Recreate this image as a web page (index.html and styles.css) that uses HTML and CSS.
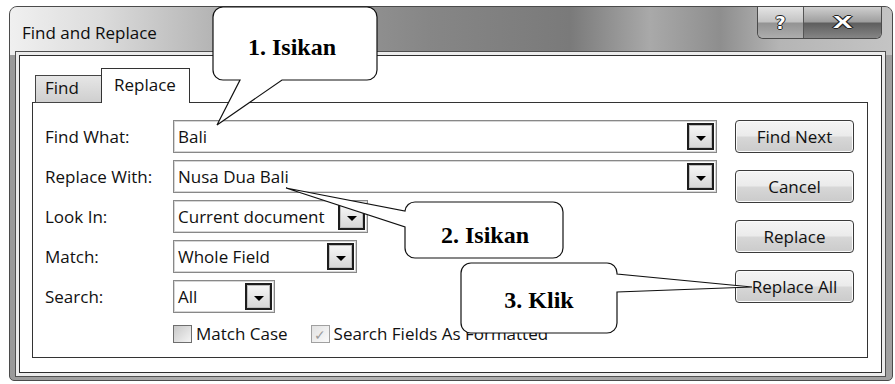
FILE: index.html
```html
<!DOCTYPE html>
<html lang="id">
<head>
  <meta charset="UTF-8" />
  <title>Find and Replace</title>
  <link rel="stylesheet" href="styles.css">
</head>
<body>

  <div class="window">
    <div class="titlebar">
      <span class="title">Find and Replace</span>
      <div class="caption">
        <span class="cap help">?</span>
        <span class="cap close"><b>X</b></span>
      </div>
    </div>

    <div class="client">
      <div class="tabs">
        <span class="tab">Find</span>
        <span class="tab active">Replace</span>
      </div>

      <div class="panel">
        <div class="form">
          <label>Find What:</label>
          <div class="combo w-full"><span>Bali</span><i class="drop"></i></div>

          <label>Replace With:</label>
          <div class="combo w-full"><span>Nusa Dua Bali</span><i class="drop"></i></div>

          <label>Look In:</label>
          <div class="combo w-look"><span>Current document</span><i class="drop"></i></div>

          <label>Match:</label>
          <div class="combo w-match"><span>Whole Field</span><i class="drop"></i></div>

          <label>Search:</label>
          <div class="combo w-search"><span>All</span><i class="drop"></i></div>

          <span></span>
          <div class="checks">
            <span class="check"></span><span class="check-label">Match Case</span>
            <span class="check checked">&#10003;</span><span class="check-label">Search Fields As Formatted</span>
          </div>
        </div>

        <div class="actions">
          <button class="btn">Find Next</button>
          <button class="btn">Cancel</button>
          <button class="btn">Replace</button>
          <button class="btn">Replace All</button>
        </div>
      </div>
    </div>
  </div>

  <!-- keterangan langkah -->
  <svg class="callouts" width="895" height="384" viewBox="0 0 895 384">
    <path d="M223 7 H367 A10 10 0 0 1 377 17 V70 A10 10 0 0 1 367 80 H282 L217 125 L240 80 H223 A10 10 0 0 1 213 70 V17 A10 10 0 0 1 223 7 Z" />
    <text x="292" y="55">1. Isikan</text>

    <path d="M415 202 H553 A10 10 0 0 1 563 212 V248 A10 10 0 0 1 553 258 H415 A10 10 0 0 1 405 248 V227 L286 188 L405 211 A10 10 0 0 1 415 202 Z" />
    <text x="485" y="243">2. Isikan</text>

    <path d="M471 263 H607 A10 10 0 0 1 617 273 V274 L752 287 L617 292 V323 A10 10 0 0 1 607 333 H471 A10 10 0 0 1 461 323 V273 A10 10 0 0 1 471 263 Z" />
    <text x="539" y="308">3. Klik</text>
  </svg>

</body>
</html>
```

FILE: styles.css
```css
* {
  box-sizing: border-box;
}

body {
  margin: 0;
  background: #fff;
  font-family: 'Open Sans', 'Noto Sans', sans-serif;
  font-size: 17px;
  color: #111;
  position: relative;
  width: 895px;
  height: 384px;
  overflow: hidden;
}

.window {
  margin: 6px 0 0 9px;
  width: 884px;
  height: 375px;
  border: 1px solid #4b4b4b;
  border-radius: 8px 8px 5px 5px;
  background: linear-gradient(to right, #9a9a9a, #b8b8b8 30%, #a6a6a6 70%, #a0a0a0);
  display: flex;
  flex-direction: column;
}

.titlebar {
  height: 48px;
  display: flex;
  align-items: flex-start;
  border-radius: 7px 7px 0 0;
  background: linear-gradient(to right, #f0f0f0 0, #dcdcdc 90px, #a0a0a0 260px, #868686 420px, #7a7a7a 560px, #a9a9a9 640px, #8e8e8e 710px, #b5b5b5 770px, #c4c4c4 100%);
}

.title {
  margin: 16px 0 0 12px;
  line-height: 20px;
  color: #0d0d0d;
}

.caption {
  margin-left: auto;
  margin-right: 10px;
  display: flex;
  height: 32px;
  border: 1px solid #4a4a4a;
  border-top: none;
  border-radius: 0 0 6px 6px;
  overflow: hidden;
}

.cap {
  display: flex;
  align-items: center;
  justify-content: center;
  color: #fff;
  font-family: 'DejaVu Sans', sans-serif;
  font-weight: bold;
  font-size: 18px;
  text-shadow: 1px 0 0 #222, -1px 0 0 #222, 0 1px 0 #222, 0 -1px 0 #222;
}

.help {
  width: 46px;
  border-right: 1px solid #555;
  background: linear-gradient(#e4e4e4, #c3c3c3 48%, #939393 52%, #adadad);
}

.close {
  width: 77px;
  background: linear-gradient(#cfcfcf, #9e9e9e 48%, #5e5e5e 52%, #858585);
}

.close b {
  display: inline-block;
  font-family: 'Liberation Sans', sans-serif;
  font-size: 17px;
  transform: scaleX(1.7);
}

.client {
  flex: 1;
  margin: 0 10px 7px 9px;
  background: #fff;
  border: 1px solid #2e2e2e;
  box-shadow: 0 0 0 3px #ececec, 0 0 0 4px #4f4f4f;
  padding: 12px 13px 14px 12px;
  display: flex;
  flex-direction: column;
}

.tabs {
  display: flex;
  align-items: flex-end;
  height: 35px;
  padding-left: 3px;
  margin-bottom: -1px;
  position: relative;
  z-index: 1;
}

.tab {
  height: 28px;
  line-height: 24px;
  padding-left: 9px;
  width: 67px;
  border: 1px solid #444;
  background: linear-gradient(#e6e6e6, #cfcfcf);
}

.tab.active {
  height: 35px;
  width: 89px;
  margin-left: -1px;
  padding: 4px 0 0 12px;
  border-color: #333;
  border-bottom: none;
  background: #fff;
}

.panel {
  flex: 1;
  border: 1px solid #333;
  display: flex;
  padding: 17px 13px 0 12px;
}

.form {
  display: grid;
  grid-template-columns: 128px 544px;
  grid-auto-rows: 33px;
  row-gap: 7px;
  align-items: center;
}

.combo {
  height: 33px;
  border: 1px solid #888;
  box-shadow: inset 0 0 0 1px #d6d6d6;
  display: flex;
  align-items: center;
  padding-left: 4px;
  justify-self: start;
}

.w-full { width: 544px; }
.w-look { width: 195px; }
.w-match { width: 184px; }
.w-search { width: 102px; }

.drop {
  margin-left: auto;
  margin-right: 2px;
  width: 27px;
  height: 27px;
  border: 2px solid #1e1e1e;
  box-shadow: inset 0 0 0 1px #bdbdbd;
  background: linear-gradient(#f7f7f7, #d6d6d6);
  display: flex;
  align-items: center;
  justify-content: center;
  padding-top: 3px;
}

.drop::after {
  content: '';
  border-left: 5px solid transparent;
  border-right: 5px solid transparent;
  border-top: 5px solid #000;
}

.checks {
  align-self: start;
  margin-top: 5px;
  display: flex;
  align-items: center;
  height: 18px;
}

.check {
  width: 19px;
  height: 18px;
  border: 1px solid #6e6e6e;
  background: linear-gradient(135deg, #c8c8c8, #f4f4f4);
  margin-right: 4px;
  display: flex;
  align-items: center;
  justify-content: center;
  font-size: 14px;
  color: #9c9c9c;
}

.check.checked {
  margin-left: 23px;
  border-color: #a0a0a0;
  background: linear-gradient(135deg, #e2e2e2, #fafafa);
}

.check-label {
  line-height: 18px;
}

.actions {
  margin-left: 18px;
  width: 119px;
  display: flex;
  flex-direction: column;
  gap: 17px;
}

.btn {
  height: 33px;
  border: 1px solid #3a3a3a;
  border-radius: 4px;
  font-family: inherit;
  font-size: 17px;
  color: #111;
  padding: 0;
  background: linear-gradient(#f4f4f4, #ebebeb 48%, #d7d7d7 52%, #cbcbcb);
  box-shadow: inset 0 0 0 1px #fbfbfb;
}

.callouts {
  position: absolute;
  top: 0;
  left: 0;
  pointer-events: none;
}

.callouts path {
  fill: #fff;
  stroke: #111;
  stroke-width: 1.2;
}

.callouts text {
  font-family: 'Liberation Serif', serif;
  font-weight: bold;
  font-size: 24px;
  fill: #000;
  text-anchor: middle;
}
```
